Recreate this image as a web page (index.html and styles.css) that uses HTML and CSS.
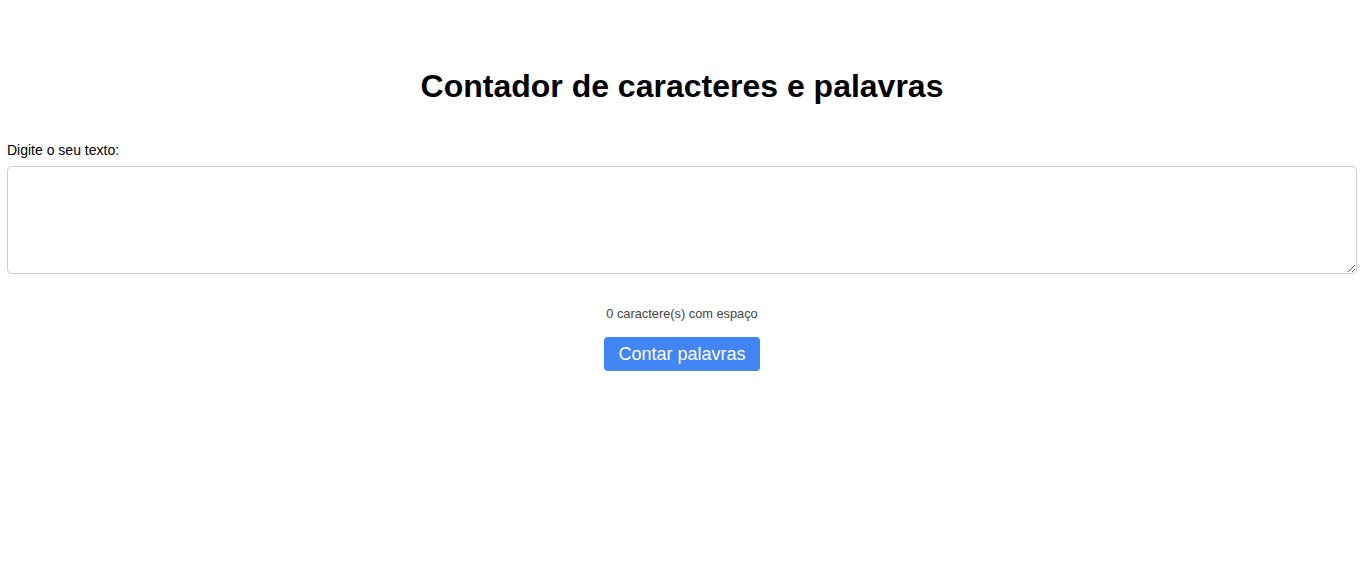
FILE: index.html
```html
<!DOCTYPE html>
<html lang="pt">
<head>
<meta charset="utf-8">
<title>Contador de caracteres e palavras</title>
<link rel="stylesheet" href="styles.css">
</head>
<body>
<main class="page">
  <h1 class="title">Contador de caracteres e palavras</h1>
  <label class="label" for="texto">Digite o seu texto:</label>
  <textarea id="texto" class="input"></textarea>
  <div class="actions">
    <p class="count">0 caractere(s) com espaço</p>
    <button class="btn" type="button">Contar palavras</button>
  </div>
</main>
</body>
</html>
```
FILE: styles.css
```css
html, body {
  margin: 0;
  padding: 0;
  background: #fff;
}
body {
  font-family: "Liberation Sans", Arial, sans-serif;
  color: #000;
}
.page {
  display: flex;
  flex-direction: column;
  padding: 68px 8px 0 7px;
}
.title {
  margin: 0;
  font-size: 32px;
  font-weight: bold;
  line-height: 37px;
  text-align: center;
}
.label {
  margin-top: 37px;
  font-size: 14px;
  line-height: 16px;
}
.input {
  box-sizing: border-box;
  margin-top: 8px;
  width: 100%;
  height: 108px;
  border: 1px solid #ccc;
  border-radius: 5px;
  padding: 8px;
  font-family: inherit;
  font-size: 14px;
  resize: vertical;
  outline: none;
}
.actions {
  display: flex;
  flex-direction: column;
  align-items: center;
}
.count {
  margin: 33px 0 0;
  font-size: 12.8px;
  line-height: 14px;
  color: #444;
}
.btn {
  margin-top: 16px;
  width: 156px;
  height: 34px;
  border: none;
  border-radius: 4px;
  background: #4285f4;
  color: #fff;
  font-family: inherit;
  font-size: 18px;
  cursor: pointer;
  padding: 0;
}
```
